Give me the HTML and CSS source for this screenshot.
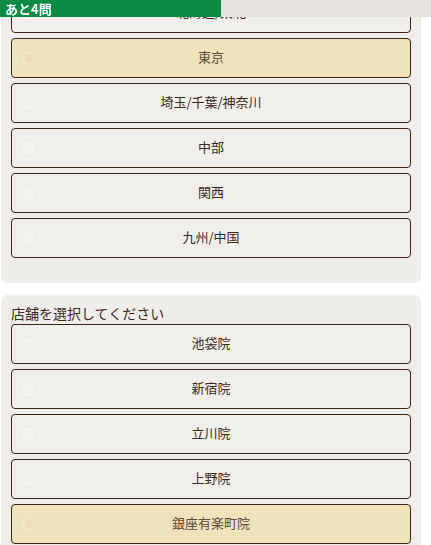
FILE: index.html
```html
<!DOCTYPE html>
<html lang="ja">
<head>
<meta charset="utf-8">
<link rel="stylesheet" href="styles.css">
</head>
<body>
<div class="progress">
  <div class="progress-fill" style="width:51.3%"><span class="progress-text">あと4問</span></div>
</div>
<main class="content">
  <section class="card card-first">
    <div class="options">
      <div class="option"><span class="radio"></span><span class="label">北海道/東北</span><span class="spacer"></span></div>
      <div class="option selected"><span class="radio"></span><span class="label">東京</span><span class="spacer"></span></div>
      <div class="option"><span class="radio"></span><span class="label">埼玉/千葉/神奈川</span><span class="spacer"></span></div>
      <div class="option"><span class="radio"></span><span class="label">中部</span><span class="spacer"></span></div>
      <div class="option"><span class="radio"></span><span class="label">関西</span><span class="spacer"></span></div>
      <div class="option"><span class="radio"></span><span class="label">九州/中国</span><span class="spacer"></span></div>
    </div>
  </section>
  <section class="card card-second">
    <p class="question">店舗を選択してください</p>
    <div class="options">
      <div class="option"><span class="radio"></span><span class="label">池袋院</span><span class="spacer"></span></div>
      <div class="option"><span class="radio"></span><span class="label">新宿院</span><span class="spacer"></span></div>
      <div class="option"><span class="radio"></span><span class="label">立川院</span><span class="spacer"></span></div>
      <div class="option"><span class="radio"></span><span class="label">上野院</span><span class="spacer"></span></div>
      <div class="option selected"><span class="radio"></span><span class="label">銀座有楽町院</span><span class="spacer"></span></div>
    </div>
  </section>
</main>
</body>
</html>
```
FILE: styles.css
```css
html, body {
  margin: 0;
  padding: 0;
  background: #ffffff;
  font-family: "Noto Sans CJK JP", "Noto Sans", sans-serif;
  color: #3b2a1f;
  overflow: hidden;
}

.progress {
  position: fixed;
  top: 0;
  left: 0;
  right: 0;
  height: 17px;
  background: #e6e3df;
  z-index: 10;
}

.progress-fill {
  height: 100%;
  background: #0b8a45;
  display: flex;
  align-items: center;
}

.progress-text {
  color: #ffffff;
  font-size: 13px;
  font-weight: 700;
  line-height: 17px;
  padding-left: 5px;
  padding-bottom: 1px;
}

.content {
  display: flex;
  flex-direction: column;
  gap: 12px;
  padding: 0 10px 0 1px;
}

.card {
  background: #efeeea;
  border-radius: 6px;
  padding: 0 10px 25px;
}

.card-first {
  margin-top: -15px;
  padding-top: 8px;
}

.card-second {
  padding-top: 8px;
}

.question {
  margin: 0;
  font-size: 14px;
  line-height: 21px;
  color: #3b2a1f;
}

.options {
  display: flex;
  flex-direction: column;
  gap: 5px;
}

.option {
  height: 40px;
  box-sizing: border-box;
  border: 1px solid #3b2418;
  border-radius: 4px;
  background: #f0efeb;
  display: flex;
  align-items: center;
  padding: 0 8px 4px;
  font-size: 13px;
}

.option.selected {
  background: #efe3bc;
  color: #5e4a36;
}

.radio {
  width: 17px;
  height: 17px;
  box-sizing: border-box;
  border-radius: 50%;
  border: 1px solid #ebe9e4;
  background: #f2f1ed;
  flex: none;
  display: flex;
  align-items: center;
  justify-content: center;
  margin-top: 4px;
}

.selected .radio {
  border-color: #ebe0bc;
  background: #f1e5c2;
}

.selected .radio::after {
  content: "";
  width: 8px;
  height: 8px;
  border-radius: 50%;
  background: #e9dcb6;
}

.label {
  flex: 1;
  text-align: center;
}

.spacer {
  width: 17px;
  flex: none;
}
```
